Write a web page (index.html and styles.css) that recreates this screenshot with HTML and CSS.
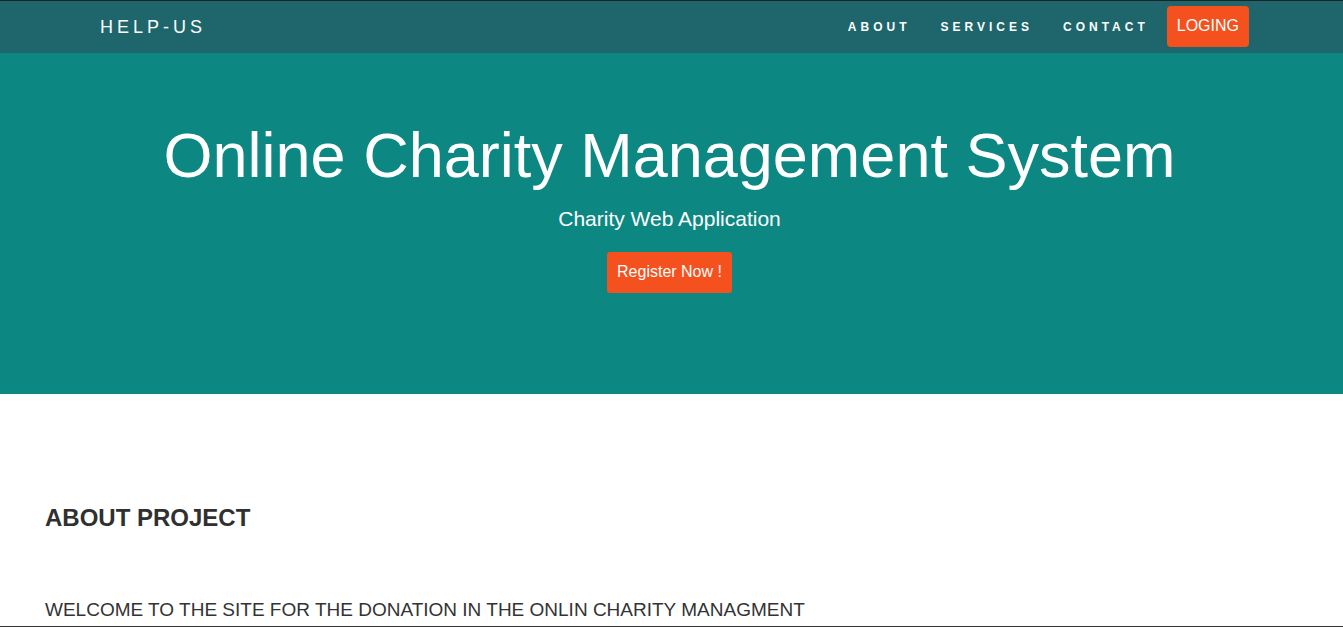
FILE: index.html
```html
<!DOCTYPE html>
<html>
<head>
<meta charset="utf-8">
<link rel="stylesheet" href="styles.css">
</head>
<body>
<nav class="navbar">
  <a class="brand" href="#">HELP-US</a>
  <ul class="nav-links">
    <li><a href="#">ABOUT</a></li>
    <li><a href="#">SERVICES</a></li>
    <li><a href="#">CONTACT</a></li>
    <li><a class="login" href="#">LOGING</a></li>
  </ul>
</nav>
<header class="hero">
  <h1 class="hero-title">Online Charity Management System</h1>
  <p class="hero-sub">Charity Web Application</p>
  <a class="btn-register" href="#">Register Now !</a>
</header>
<section class="about">
  <h2 class="about-title">ABOUT PROJECT</h2>
  <p class="about-text">WELCOME TO THE SITE FOR THE DONATION IN THE ONLIN CHARITY MANAGMENT</p>
</section>
<div class="bottom-edge"></div>
</body>
</html>
```
FILE: styles.css
```css
* { box-sizing: border-box; }
html, body { margin: 0; padding: 0; }
body {
  font-family: "Liberation Sans", Arial, sans-serif;
  background: #fff;
  color: #333;
}
a { text-decoration: none; }

.navbar {
  display: flex;
  align-items: center;
  justify-content: space-between;
  height: 53px;
  background: #1e666c;
  border-top: 1px solid #222;
  padding: 0 94px 1px 100px;
}
.brand {
  color: #fff;
  font-size: 18px;
  letter-spacing: 4px;
  line-height: 20px;
}
.nav-links {
  display: flex;
  align-items: center;
  list-style: none;
  margin: 0;
  padding: 0;
}
.nav-links a {
  display: block;
  color: #fff;
  font-size: 12px;
  font-weight: bold;
  letter-spacing: 4px;
  padding: 0 15px;
  line-height: 20px;
}
.nav-links a.login {
  margin-left: 3px;
  background: #f4511e;
  border-radius: 4px;
  font-size: 16px;
  font-weight: normal;
  letter-spacing: 0;
  padding: 10px 10px 11px;
  line-height: 20px;
}

.hero {
  background: #0c8782;
  height: 341px;
  display: flex;
  flex-direction: column;
  align-items: center;
  padding: 66px 4px 0 0;
  color: #fff;
}
.hero-title {
  margin: 0;
  font-size: 63px;
  font-weight: normal;
  line-height: 72px;
}
.hero-sub {
  margin: 16px 0 0;
  font-size: 21px;
  line-height: 24px;
}
.btn-register {
  margin-top: 21px;
  background: #f4511e;
  color: #fff;
  font-size: 16px;
  line-height: 20px;
  padding: 10px 10px 11px;
  border-radius: 3px;
}

.about {
  padding: 110px 45px 0;
}
.about-title {
  margin: 0;
  font-size: 24px;
  font-weight: bold;
  line-height: 28px;
  color: #303030;
}
.about-text {
  margin: 66px 0 0;
  font-size: 19px;
  line-height: 24px;
  color: #333;
}
.bottom-edge {
  position: fixed;
  left: 0;
  right: 0;
  bottom: 0;
  height: 1px;
  background: #333;
}
```
